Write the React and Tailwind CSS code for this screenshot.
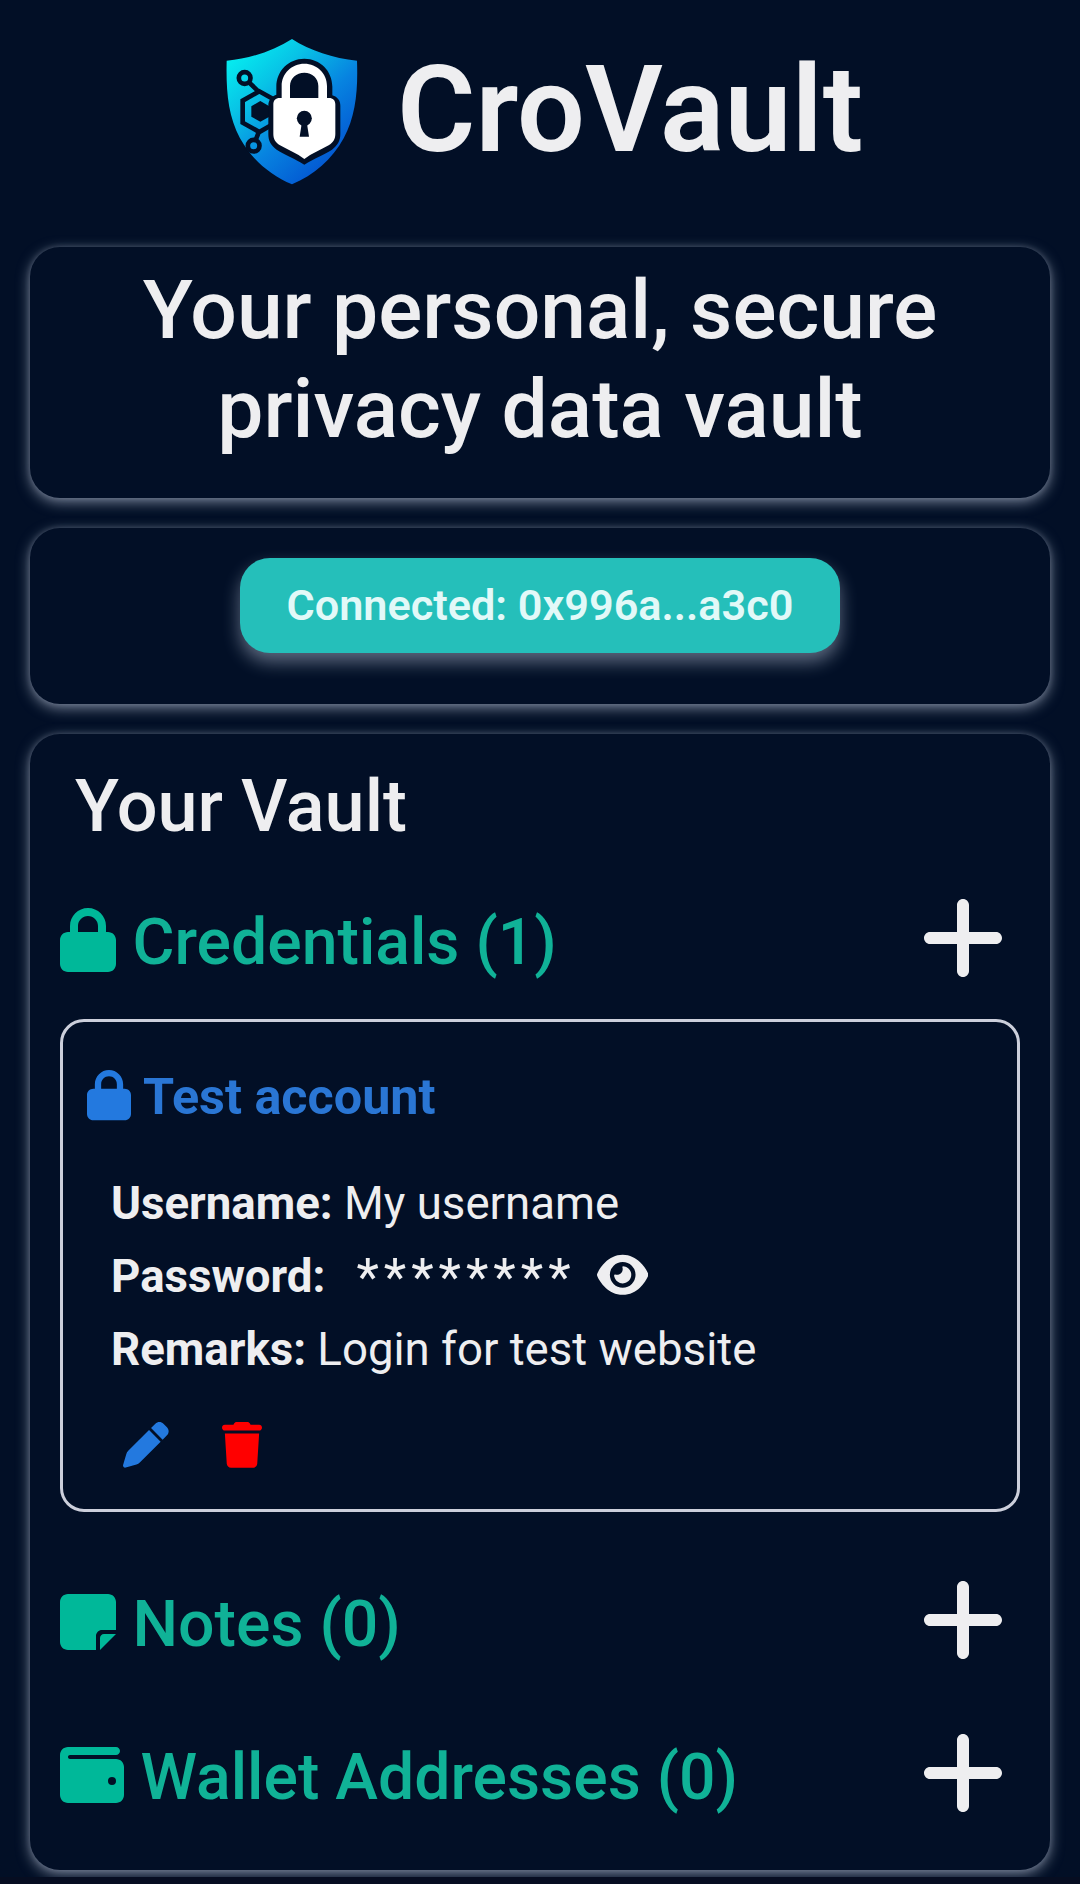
import React from "react";

function Icon({ d, viewBox, className }) {
  return (
    <svg viewBox={viewBox} className={className} fill="currentColor" aria-hidden="true">
      <path d={d} />
    </svg>
  );
}

const LOCK =
  "M144 144v48H304V144c0-44.2-35.8-80-80-80s-80 35.8-80 80zM80 192V144C80 64.5 144.5 0 224 0s144 64.5 144 144v48h16c35.3 0 64 28.7 64 64V448c0 35.3-28.7 64-64 64H64c-35.3 0-64-28.7-64-64V256c0-35.3 28.7-64 64-64H80z";
const NOTE =
  "M0 96C0 60.7 28.7 32 64 32H384c35.3 0 64 28.7 64 64V320H336c-26.5 0-48 21.5-48 48V480H64c-35.3 0-64-28.7-64-64V96zM448 352L320 480V384c0-17.7 14.3-32 32-32H448z";
const WALLET =
  "M64 32C28.7 32 0 60.7 0 96V416c0 35.3 28.7 64 64 64H448c35.3 0 64-28.7 64-64V192c0-35.3-28.7-64-64-64H80c-8.8 0-16-7.2-16-16s7.2-16 16-16H448c17.7 0 32-14.3 32-32s-14.3-32-32-32H64zM416 272a32 32 0 1 1 0 64 32 32 0 1 1 0-64z";
const PLUS =
  "M256 80c0-17.7-14.3-32-32-32s-32 14.3-32 32V224H48c-17.7 0-32 14.3-32 32s14.3 32 32 32H192V432c0 17.7 14.3 32 32 32s32-14.3 32-32V288H400c17.7 0 32-14.3 32-32s-14.3-32-32-32H256V80z";
const EYE =
  "M288 32c-80.8 0-145.5 36.8-192.6 80.6C48.6 156 17.3 208 2.5 243.7c-3.3 7.9-3.3 16.7 0 24.6C17.3 304 48.6 356 95.4 399.4C142.5 443.2 207.2 480 288 480s145.5-36.8 192.6-80.6c46.8-43.5 78.1-95.4 93-131.1c3.3-7.9 3.3-16.7 0-24.6c-14.9-35.7-46.2-87.7-93-131.1C433.5 68.8 368.8 32 288 32zM144 256a144 144 0 1 1 288 0 144 144 0 1 1 -288 0zm144-64c0 35.3-28.7 64-64 64c-7.1 0-13.9-1.2-20.3-3.3c-5.5-1.8-11.9 1.6-11.7 7.4c.3 6.9 1.3 13.8 3.2 20.7c13.7 51.2 66.4 81.6 117.6 67.9s81.6-66.4 67.9-117.6c-11.1-41.5-47.8-69.4-88.6-71.1c-5.8-.2-9.2 6.1-7.4 11.7c2.1 6.4 3.3 13.2 3.3 20.3z";
const PEN =
  "M362.7 19.3L314.3 67.7 444.3 197.7l48.4-48.4c25-25 25-65.5 0-90.5L453.3 19.3c-25-25-65.5-25-90.5 0zm-71 71L58.6 323.5c-10.4 10.4-18 23.3-22.2 37.4L1 481.2C-1.5 489.7 .8 498.8 7 505s15.3 8.5 23.7 6.1l120.3-35.4c14.1-4.2 27-11.8 37.4-22.2L421.7 220.3 291.7 90.3z";
const TRASH =
  "M135.2 17.7L128 32H32C14.3 32 0 46.3 0 64S14.3 96 32 96H416c17.7 0 32-14.3 32-32s-14.3-32-32-32H320l-7.2-14.3C307.4 6.8 296.3 0 284.2 0H163.8c-12.1 0-23.2 6.8-28.6 17.7zM416 128H32L53.2 467c1.6 25.3 22.6 45 47.9 45H346.9c25.3 0 46.3-19.7 47.9-45L416 128z";

function Logo() {
  return (
    <svg viewBox="0 0 510 540" className="h-[180px] w-[170px] shrink-0" aria-label="CroVault logo">
      <defs>
        <linearGradient id="shield" x1="70" y1="100" x2="370" y2="420" gradientUnits="userSpaceOnUse">
          <stop offset="0" stopColor="#05eef0" />
          <stop offset="0.3" stopColor="#08c3e6" />
          <stop offset="0.65" stopColor="#0783e0" />
          <stop offset="1" stopColor="#0358d2" />
        </linearGradient>
      </defs>
      <path
        d="M246 57C300 92 370 115 441 122C444 210 438 285 401 355C366 419 312 465 246 493C180 465 126 419 90 355C53 285 48 210 50 122C122 115 192 92 246 57Z"
        fill="url(#shield)"
      />
      <g fill="none" stroke="#020f26" strokeWidth="14">
        <circle cx="104" cy="174" r="17.5" />
        <circle cx="131" cy="377" r="17.5" />
        <path d="M117 187L148 217M137 360L147 335M196 241L148 214L98 242V308L148 336L190 312" />
      </g>
      <path d="M151 243L178 259V290L151 305L124 290V259Z" fill="#020f26" />
      <path
        d="M199 224V200C199 152 236 116 283 116S367 152 367 200V226C383 231 391 242 391 257V342C391 362 383 376 366 389C344 403 312 416 283 434C254 416 222 403 200 389C182 376 175 362 175 342V257C175 240 184 229 199 224Z"
        fill="#020f26"
      />
      <path
        d="M215 234V198C215 160 245 131 283 131S351 160 351 198V234H357C369 234 376 241 376 253V342C376 357 370 367 356 376C332 390 305 400 283 417C261 400 234 390 210 376C196 367 190 357 190 342V253C190 241 197 234 209 234ZM240 234H325V198C325 175 307 158 283 158S240 175 240 198Z"
        fill="#fff"
        fillRule="evenodd"
      />
      <circle cx="283" cy="295" r="22.5" fill="#020f26" />
      <path d="M276 305H290L297 350H269Z" fill="#020f26" />
    </svg>
  );
}

function Panel({ className, children }) {
  return (
    <section
      className={
        "rounded-[30px] bg-[#020f26] shadow-[0_0_6px_rgba(220,230,250,0.16),0_4px_14px_rgba(220,230,250,0.52)] " +
        className
      }
    >
      {children}
    </section>
  );
}

function SectionRow({ icon, viewBox, iconClass, title }) {
  return (
    <div className="flex h-24 items-center justify-between">
      <div className="flex items-center text-[#00b899]">
        <Icon d={icon} viewBox={viewBox} className={"mt-1 " + iconClass} />
        <h3 className="ml-[16.5px] pt-2 text-[64.3px] leading-[76px] font-medium text-[#10b297]">{title}</h3>
      </div>
      <button className="mr-[15px]">
        <Icon d={PLUS} viewBox="0 0 448 512" className="h-24 w-21" />
      </button>
    </div>
  );
}

export default function App() {
  return (
    <div className="h-[1884px] w-[1080px] bg-[#060d21]">
      <div className="h-[1877px] overflow-hidden bg-[#020f26] font-['Roboto',sans-serif] text-[#eeeef0]">
        <header className="flex items-center pt-5 pl-[210px]">
          <Logo />
          <h1 className="ml-[17px] text-[120px] leading-[144px] font-semibold">CroVault</h1>
        </header>

        <main className="mx-[30px] mt-[47px] flex flex-col gap-[30px]">
          <Panel className="h-[251px] pt-3.5 text-center">
            <h2 className="text-[82.2px] leading-[99px] font-medium">
              Your personal, secure
              <br />
              privacy data vault
            </h2>
          </Panel>

          <Panel className="flex h-44 items-start justify-center pt-[30px]">
            <button className="h-[95px] w-[600px] rounded-[30px] bg-[#25bfba] pt-0.5 text-[43.2px] font-semibold text-[#e2f9f8] shadow-[0_9px_18px_rgba(220,230,250,0.42)]">
              Connected: 0x996a...a3c0
            </button>
          </Panel>

          <Panel className="h-[1136px] px-[30px] pt-[30px]">
            <h2 className="mb-10 pl-[15px] text-[72px] leading-[86px] font-medium">Your Vault</h2>
            <SectionRow icon={LOCK} viewBox="0 0 448 512" iconClass="h-16 w-14" title="Credentials (1)" />

            <article className="mt-[33px] mb-[60px] h-[493px] rounded-[24px] border-[3px] border-[#cccfdb] pt-[47px]">
              <div className="flex items-center gap-3 pl-6 text-[#2379df]">
                <Icon d={LOCK} viewBox="0 0 448 512" className="h-[50.3px] w-11" />
                <h4 className="pt-[3px] text-[50.3px] leading-[50px] font-bold text-[#2a76d4]">Test account</h4>
              </div>
              <div className="mt-[45px] pl-12 text-[45.6px] leading-[73.1px]">
                <p>
                  <strong className="font-bold">Username:</strong> My username
                </p>
                <div className="flex h-[73.1px] items-center">
                  <strong className="font-bold">Password:</strong>
                  <span className="ml-[31px] pt-0.5 text-[52px] tracking-[5px]">********</span>
                  <Icon d={EYE} viewBox="0 0 576 512" className="mb-1 ml-[21px] h-[45.7px] w-[51.4px]" />
                </div>
                <p>
                  <strong className="font-bold">Remarks:</strong> Login for test website
                </p>
              </div>
              <div className="mt-9 flex gap-[53px] pl-[60px]">
                <Icon d={PEN} viewBox="0 0 512 512" className="size-[45.7px] text-[#2379df]" />
                <Icon d={TRASH} viewBox="0 0 448 512" className="h-[45.7px] w-10 text-[#ff0000]" />
              </div>
            </article>

            <SectionRow icon={NOTE} viewBox="0 0 448 512" iconClass="h-16 w-14" title="Notes (0)" />
            <div className="mt-[57px]">
              <SectionRow icon={WALLET} viewBox="0 0 512 512" iconClass="size-16" title="Wallet Addresses (0)" />
            </div>
          </Panel>
        </main>
      </div>
    </div>
  );
}
